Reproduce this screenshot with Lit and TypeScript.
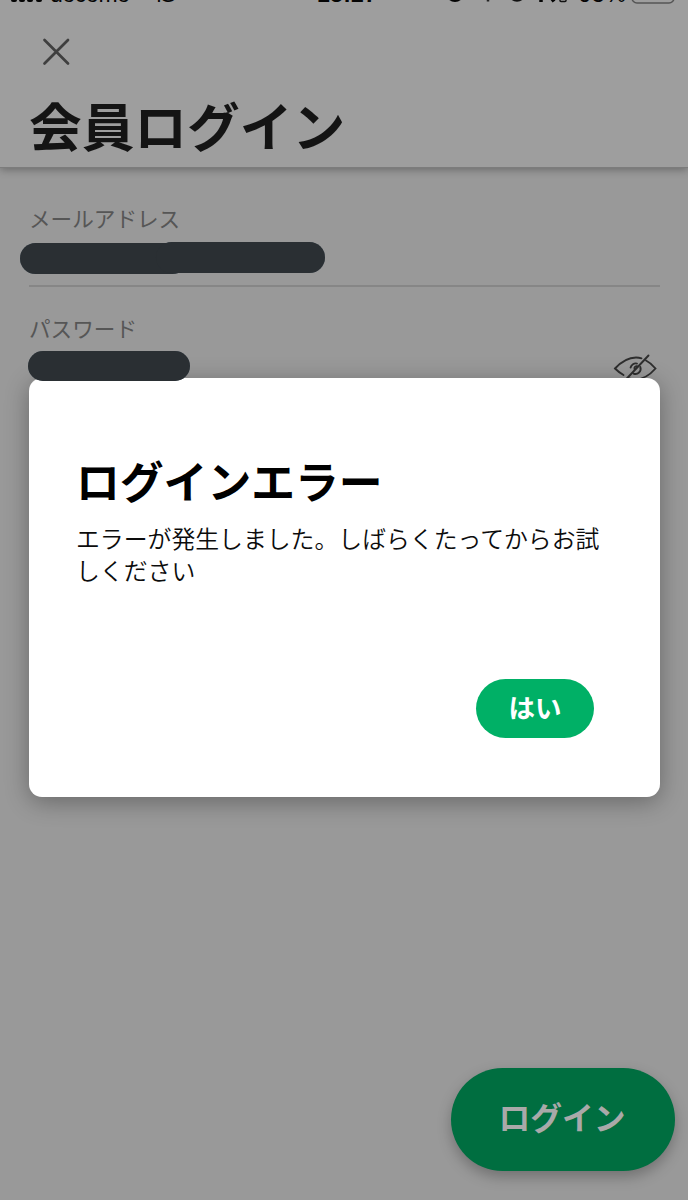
import { LitElement, html, css } from "lit";
import { customElement } from "lit/decorators.js";

@customElement("app-root")
export class AppRoot extends LitElement {
  static styles = css`
    :host {
      display: block;
      font-family: "Noto Sans CJK JP", "Noto Sans", sans-serif;
    }
    * { box-sizing: border-box; }
    .screen {
      position: relative;
      width: 688px;
      height: 1200px;
      overflow: hidden;
      background: #999;
      display: flex;
      flex-direction: column;
    }
    .header {
      height: 168px;
      flex: none;
      background: #9e9e9e;
      border-bottom: 1px solid #7c7c7c;
      box-shadow: 0 2px 8px rgba(0, 0, 0, 0.3);
      display: flex;
      flex-direction: column;
    }
    .status {
      height: 10px;
      flex: none;
      overflow: hidden;
    }
    .status svg { display: block; }
    .status text {
      font-family: "Liberation Sans", sans-serif;
      font-size: 23px;
      fill: #050505;
    }
    .close {
      width: 30px;
      height: 30px;
      margin: 27px 0 0 41px;
      flex: none;
    }
    h1 {
      margin: 18px 0 0 29px;
      font-size: 52.7px;
      line-height: 78px;
      font-weight: 700;
      color: #141414;
      white-space: nowrap;
    }
    .field {
      margin: 0 28px 0 29px;
      display: flex;
      flex-direction: column;
    }
    .email {
      height: 119px;
      border-bottom: 2px solid #868686;
    }
    .label {
      font-size: 21.6px;
      line-height: 32px;
      color: #565656;
      font-weight: 400;
      white-space: nowrap;
    }
    .email .label { margin-top: 34px; }
    .password .label { margin-top: 25px; }
    .masks {
      display: flex;
      align-items: flex-start;
      position: relative;
      z-index: 3;
      filter: drop-shadow(0 0 0.6px #65717a);
    }
    .mask {
      height: 31px;
      border-radius: 16px;
      background: #2a2f33;
      flex: none;
    }
    .email .masks { margin: 8px 0 0 -9px; }
    .first { width: 168px; margin-top: 1px; }
    .second { width: 169px; margin-left: -32px; }
    .secret { width: 162px; margin-left: -1px; }
    .row {
      display: flex;
      justify-content: space-between;
      margin-top: 7px;
    }
    .secret { height: 30px; }
    .eye { margin: 3px 3px 0 0; width: 44px; height: 32px; }
    .login {
      margin: auto 13px 29px auto;
      width: 224px;
      height: 103px;
      flex: none;
      border: 0;
      border-radius: 52px;
      background: #006e40;
      color: #a9a9a9;
      font: 700 31.8px/40px "Noto Sans CJK JP", sans-serif;
      padding: 0 2px 8px 0;
      box-shadow: 0 6px 14px rgba(0, 0, 0, 0.26);
      white-space: nowrap;
    }
    .dialog {
      position: absolute;
      left: 29px;
      top: 378px;
      width: 631px;
      height: 419px;
      z-index: 2;
      border-radius: 13px;
      background: #fff;
      box-shadow: 0 5px 24px rgba(0, 0, 0, 0.32);
      padding: 69px 48px 59px 47px;
      display: flex;
      flex-direction: column;
    }
    h2 {
      margin: 0;
      font-size: 43.8px;
      line-height: 66px;
      font-weight: 700;
      color: #000;
      white-space: nowrap;
    }
    p {
      margin: 9px 0 0;
      font-size: 23.85px;
      line-height: 32px;
      font-weight: 350;
      color: #0c0c0c;
      white-space: nowrap;
    }
    .ok {
      margin: auto 18px 0 auto;
      width: 118px;
      height: 59px;
      flex: none;
      border: 0;
      border-radius: 30px;
      background: #00b066;
      color: #fff;
      font: 700 26.5px/36px "Noto Sans CJK JP", sans-serif;
      padding: 0 0 3px;
    }
  `;

  render() {
    return html`
      <div class="screen">
        <header class="header">
          <div class="status">
            <svg width="688" height="10" viewBox="0 0 688 10">
              <rect x="11" y="-8" width="6" height="10" rx="2" fill="#050505" />
              <rect x="19" y="-8" width="6" height="10" rx="2" fill="#050505" />
              <rect x="27" y="-8" width="6" height="10" rx="2" fill="#050505" />
              <rect x="36" y="-8" width="6" height="10" rx="2" fill="#050505" />
              <text x="50" y="1.5" textLength="80">docomo</text>
              <text x="150" y="1.5" textLength="27">4G</text>
              <text x="317" y="1.5" textLength="60" font-weight="700">13:27</text>
              <circle cx="455" cy="-7" r="9" fill="#050505" />
              <path d="M488 -8V1.5" stroke="#222" stroke-width="2.5" />
              <circle cx="517" cy="-7" r="7.5" fill="none" stroke="#111" stroke-width="2.5" />
              <path d="M541 -5V2M549 -5L554 1.5" stroke="#050505" stroke-width="3.5" />
              <rect x="560" y="-9" width="6" height="10.5" rx="1" fill="none" stroke="#111" stroke-width="1.5" />
              <text x="578" y="1.5" textLength="48">63%</text>
              <rect x="632" y="-18" width="42" height="21" rx="5" fill="none" stroke="#555" stroke-width="1.5" />
            </svg>
          </div>
          <svg class="close" viewBox="0 0 30 30">
            <path d="M3.5 3L27 26.5M27 3L3.5 26.5" fill="none" stroke="#3f3f3f" stroke-width="2.7" stroke-linecap="round" />
          </svg>
          <h1>会員ログイン</h1>
        </header>

        <section class="field email">
          <div class="label">メールアドレス</div>
          <div class="masks">
            <div class="mask first"></div>
            <div class="mask second"></div>
          </div>
        </section>

        <section class="field password">
          <div class="label">パスワード</div>
          <div class="row">
            <div class="masks"><div class="mask secret"></div></div>
            <svg class="eye" viewBox="0 0 44 32" fill="none" stroke="#2e2e2e" stroke-width="1.9" stroke-linecap="round">
              <path d="M10.5 21C7.5 19.3 4.5 17 2 14.5C9 7 16 3.5 23 3.5C25 3.5 27 3.8 28.5 4.3" />
              <path d="M33 6.5C37 8.5 40 11.5 42.5 14.5C36 22 29 25.5 22 25.5C20 25.5 18 25.2 16 24.5" />
              <path d="M35.5 1.5L11.5 27" />
              <path d="M17.6 13.5A5.2 5.2 0 0 1 24 9.6M27.3 13A5.2 5.2 0 0 1 20.5 19.6" />
              <path d="M24 12.3A2.2 2.2 0 0 0 21.5 15" />
            </svg>
          </div>
        </section>

        <button class="login">ログイン</button>

        <div class="dialog" role="dialog">
          <h2>ログインエラー</h2>
          <p>エラーが発生しました。しばらくたってからお試<br />しください</p>
          <button class="ok">はい</button>
        </div>
      </div>
    `;
  }
}
